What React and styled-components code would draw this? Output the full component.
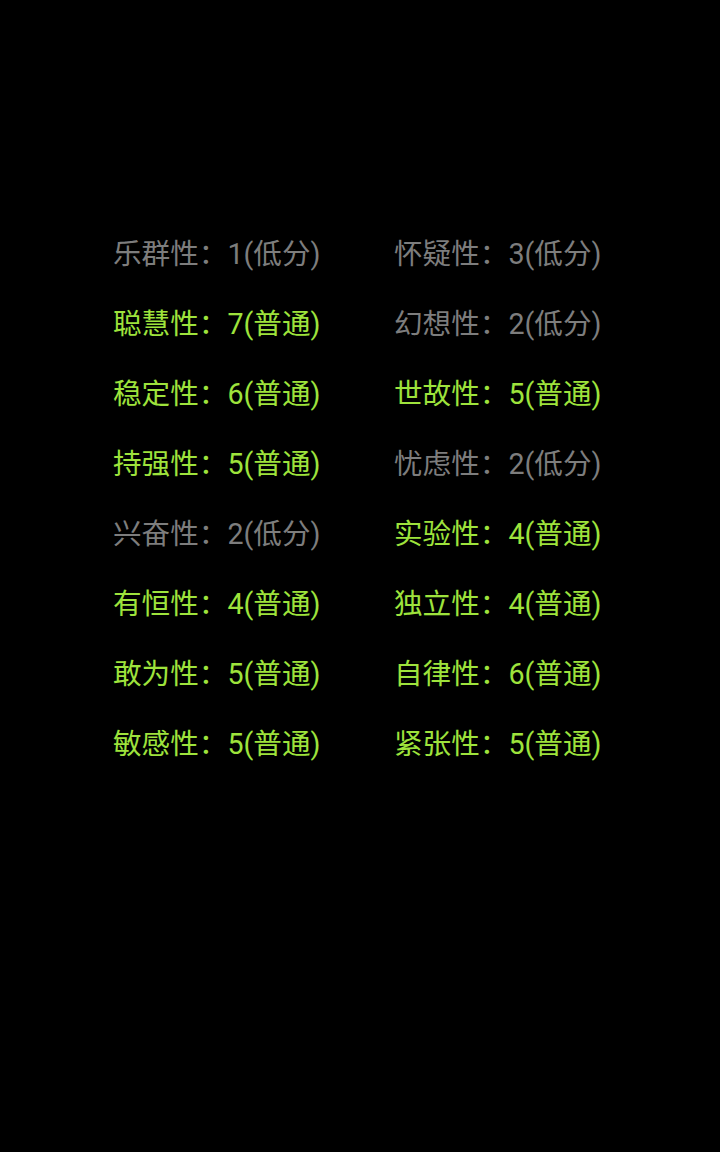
import styled, { createGlobalStyle } from "styled-components";

const GlobalStyle = createGlobalStyle`
  html, body {
    margin: 0;
    padding: 0;
    background: #000;
  }
  body {
    font-family: Roboto, "Noto Sans CJK SC", sans-serif;
  }
`;

const Screen = styled.div`
  width: 720px;
  height: 1152px;
  background: #000;
  box-sizing: border-box;
  padding: 219px 0 0 113px;
`;

const Grid = styled.div`
  display: grid;
  grid-template-columns: 281px 281px;
  grid-auto-rows: 70px;
  align-items: center;
`;

const Item = styled.div`
  font-size: 28.6px;
  line-height: 1;
  white-space: nowrap;
  color: ${(p) => (p.$low ? "#7d7d7d" : "#9ee33c")};
`;

const traits = [
  ["乐群性", 1],
  ["怀疑性", 3],
  ["聪慧性", 7],
  ["幻想性", 2],
  ["稳定性", 6],
  ["世故性", 5],
  ["持强性", 5],
  ["忧虑性", 2],
  ["兴奋性", 2],
  ["实验性", 4],
  ["有恒性", 4],
  ["独立性", 4],
  ["敢为性", 5],
  ["自律性", 6],
  ["敏感性", 5],
  ["紧张性", 5],
];

export default function App() {
  return (
    <>
      <GlobalStyle />
      <Screen>
        <Grid>
          {traits.map(([name, score]) => {
            const low = score <= 3;
            return (
              <Item key={name} $low={low}>
                {name}：{score}({low ? "低分" : "普通"})
              </Item>
            );
          })}
        </Grid>
      </Screen>
    </>
  );
}
